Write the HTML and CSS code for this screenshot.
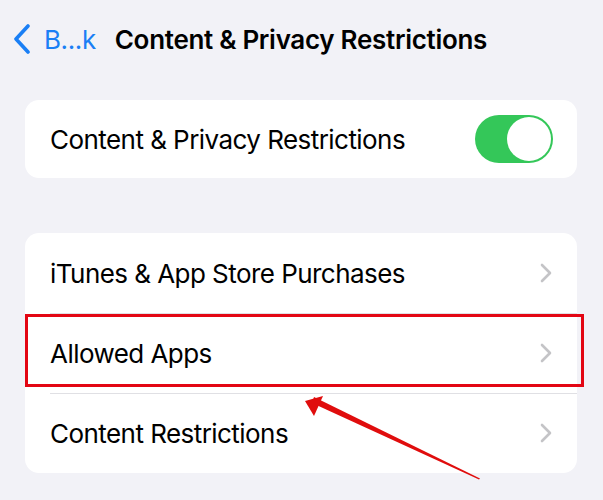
FILE: index.html
```html
<!DOCTYPE html>
<html>
<head>
<meta charset="utf-8">
<link rel="stylesheet" href="styles.css">
</head>
<body>
<div class="screen">
  <header class="nav">
    <div class="back">
      <svg class="back-chevron" width="20" height="30" viewBox="0 0 20 30"><path d="M16 2 L4 15 L16 28" fill="none" stroke="#1a7ff5" stroke-width="3.6" stroke-linecap="round" stroke-linejoin="round"/></svg>
      <span class="back-label">B...k</span>
    </div>
    <h1 class="title">Content &amp; Privacy Restrictions</h1>
  </header>

  <section class="card card-toggle">
    <div class="row">
      <span class="label">Content &amp; Privacy Restrictions</span>
      <div class="switch"><div class="knob"></div></div>
    </div>
  </section>

  <section class="card card-list">
    <div class="row row-link">
      <span class="label">iTunes &amp; App Store Purchases</span>
      <svg class="chev" width="12" height="20" viewBox="0 0 12 20"><path d="M2 2 L10 10 L2 18" fill="none" stroke="#c4c4c7" stroke-width="2.6" stroke-linecap="round" stroke-linejoin="round"/></svg>
    </div>
    <div class="row row-link highlighted">
      <span class="label">Allowed Apps</span>
      <svg class="chev" width="12" height="20" viewBox="0 0 12 20"><path d="M2 2 L10 10 L2 18" fill="none" stroke="#c4c4c7" stroke-width="2.6" stroke-linecap="round" stroke-linejoin="round"/></svg>
      <div class="redbox"></div>
    </div>
    <div class="row row-link">
      <span class="label">Content Restrictions</span>
      <svg class="chev" width="12" height="20" viewBox="0 0 12 20"><path d="M2 2 L10 10 L2 18" fill="none" stroke="#c4c4c7" stroke-width="2.6" stroke-linecap="round" stroke-linejoin="round"/></svg>
    </div>
  </section>

  <svg class="arrow" width="603" height="500" viewBox="0 0 603 500">
    <polygon points="479,479.5 312,403 314,397 480,478.5" fill="#e00d0d"/>
    <polygon points="305,401 323,396 314,416" fill="#e00d0d"/>
  </svg>
</div>
</body>
</html>
```
FILE: styles.css
```css
html, body {
  margin: 0;
  padding: 0;
  background: #f2f2f7;
}
body {
  font-family: "Inter", "Liberation Sans", sans-serif;
  color: #000;
  width: 603px;
  height: 500px;
  overflow: hidden;
}
.screen {
  position: relative;
  width: 603px;
  height: 500px;
  display: flex;
  flex-direction: column;
}
.nav {
  height: 78px;
  display: flex;
  align-items: center;
  padding-left: 12px;
}
.back {
  display: flex;
  align-items: center;
  gap: 12px;
}
.back-chevron {
  display: block;
  margin-top: -1px;
}
.back-label {
  color: #1a7ff5;
  font-size: 26px;
  letter-spacing: -0.4px;
}
.title {
  margin: 0 0 0 19px;
  font-size: 26px;
  font-weight: 600;
  letter-spacing: -0.3px;
}
.card {
  margin: 0 26px 0 25px;
  background: #fff;
  border-radius: 14px;
}
.card-toggle {
  margin-top: 22px;
}
.card-list {
  margin-top: 55px;
}
.row {
  position: relative;
  height: 78px;
  display: flex;
  align-items: center;
  justify-content: space-between;
  padding: 0 24px 0 25px;
}
.card-list .row {
  height: 80px;
  padding-right: 25px;
}
.card-list .row + .row::before {
  content: "";
  position: absolute;
  left: 25px;
  right: 0;
  top: 0;
  height: 1px;
  background: #e0e0e4;
}
.label {
  font-size: 26px;
  letter-spacing: -0.55px;
}
.switch {
  width: 78px;
  height: 48px;
  border-radius: 24px;
  background: #34c759;
  display: flex;
  align-items: center;
  justify-content: flex-end;
  padding: 0 2px;
  box-sizing: border-box;
}
.knob {
  width: 44px;
  height: 44px;
  border-radius: 50%;
  background: #fff;
}
.chev {
  display: block;
}
.redbox {
  position: absolute;
  left: 0;
  right: -7px;
  top: 1px;
  height: 73px;
  border: 3px solid #e30613;
  box-sizing: border-box;
  z-index: 2;
}
.arrow {
  position: absolute;
  left: 0;
  top: 0;
  pointer-events: none;
  z-index: 3;
}
```
